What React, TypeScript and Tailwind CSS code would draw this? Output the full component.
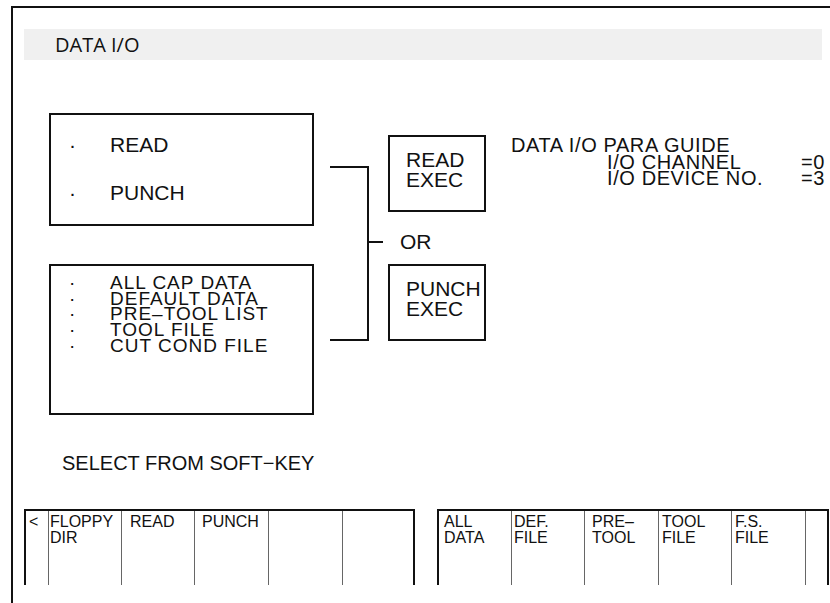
import React from 'react'

const sans = { fontFamily: '"Liberation Sans", Arial, sans-serif' }

type Key = { lines: string[]; w: string; pl: string; edge?: 'left' | 'right' }

const leftKeys: Key[] = [
  { lines: ['<'], w: 'w-[24px]', pl: 'pl-[3px]', edge: 'left' },
  { lines: ['FLOPPY', 'DIR'], w: 'w-[73px]', pl: 'pl-[1px]' },
  { lines: ['READ'], w: 'w-[73px]', pl: 'pl-[8px]' },
  { lines: ['PUNCH'], w: 'w-[74px]', pl: 'pl-[7px]' },
  { lines: [], w: 'w-[74px]', pl: 'pl-[2px]' },
  { lines: [], w: 'w-[73px]', pl: 'pl-[2px]', edge: 'right' },
]

const rightKeys: Key[] = [
  { lines: ['ALL', 'DATA'], w: 'w-[74px]', pl: 'pl-[5px]', edge: 'left' },
  { lines: ['DEF.', 'FILE'], w: 'w-[73px]', pl: 'pl-[2px]' },
  { lines: ['PRE\u2013', 'TOOL'], w: 'w-[74px]', pl: 'pl-[7px]' },
  { lines: ['TOOL', 'FILE'], w: 'w-[73px]', pl: 'pl-[3px]' },
  { lines: ['F.S.', 'FILE'], w: 'w-[74px]', pl: 'pl-[3px]' },
  { lines: [], w: 'w-[24px]', pl: 'pl-[2px]', edge: 'right' },
]

function SoftKey({ k }: { k: Key }) {
  const border =
    k.edge === 'left'
      ? 'border-l-2 border-[#111]'
      : k.edge === 'right'
        ? 'border-l border-l-[#666] border-r-2 border-r-[#111]'
        : 'border-l border-[#666]'
  return (
    <div className={`${k.w} ${k.pl} ${border} h-full pt-[3px] text-[16px] leading-[16px] text-[#111] box-border shrink-0`}>
      {k.lines.map((l) => (
        <div key={l}>{l}</div>
      ))}
    </div>
  )
}

function KeyGroup({ keys }: { keys: Key[] }) {
  return (
    <div className="flex h-[76px] border-t-2 border-[#111]">
      {keys.map((k, i) => (
        <SoftKey key={i} k={k} />
      ))}
    </div>
  )
}

function Bullet({ children }: { children: string }) {
  return (
    <div className="flex">
      <span className="w-[59px] pl-[18px]">·</span>
      <span>{children}</span>
    </div>
  )
}

function ExecBox({ lines }: { lines: string[] }) {
  return (
    <div className="ml-[19px] w-[98px] h-[77px] border-2 border-[#111] pl-[16px] pt-[13px] leading-[20px]">
      {lines.map((l) => (
        <div key={l}>{l}</div>
      ))}
    </div>
  )
}

export default function App() {
  return (
    <div className="w-[830px] h-[603px] overflow-hidden bg-white text-[#111]" style={sans}>
      <div className="ml-[11px] mt-[6px] h-[597px] border-l-2 border-t-2 border-[#111]">
        {/* header */}
        <div
          className="mt-[21px] ml-[11px] w-[798px] h-[31px] bg-[#f0f0f0] flex items-center pl-[31px] text-[20px]"
          style={{ fontFamily: '"Open Sans", sans-serif' }}
        >
          DATA I/O
        </div>

        {/* diagram */}
        <div className="mt-[53px] ml-[36px] flex items-start text-[21px]">
          <div className="w-[265px] flex flex-col">
            <div className="h-[113px] border-2 border-[#111] pt-[18px] flex flex-col gap-[24px] leading-[24px]">
              <Bullet>READ</Bullet>
              <Bullet>PUNCH</Bullet>
            </div>
            <div className="mt-[38px] h-[151px] border-2 border-[#111] pt-[9px] text-[19px] tracking-[1px] leading-[15.7px]">
              <Bullet>ALL CAP DATA</Bullet>
              <Bullet>DEFAULT DATA</Bullet>
              <Bullet>PRE–TOOL LIST</Bullet>
              <Bullet>TOOL FILE</Bullet>
              <Bullet>CUT COND FILE</Bullet>
            </div>
          </div>

          <div className="ml-[16px] mt-[53px] w-[39px] h-[175px] border-t-2 border-r-2 border-b-2 border-[#111]" />

          <div className="flex flex-col mt-[22px]">
            <ExecBox lines={['READ', 'EXEC']} />
            <div className="h-[52px] pt-[8px] flex items-center">
              <div className="w-[14px] h-[2px] bg-[#111]" />
              <span className="ml-[17px] leading-[20px]">OR</span>
            </div>
            <ExecBox lines={['PUNCH', 'EXEC']} />
          </div>

          <div className="ml-[25px] mt-[24px] text-[20px] tracking-[0.6px] leading-[16.5px] whitespace-nowrap">
            <div>DATA I/O PARA GUIDE</div>
            <div className="pl-[96px] grid grid-cols-[194px_auto]">
              <span>I/O CHANNEL</span>
              <span>=0</span>
              <span>I/O DEVICE NO.</span>
              <span>=3</span>
            </div>
          </div>
        </div>

        {/* prompt */}
        <div className="mt-[38px] ml-[49px] text-[20px] leading-[20px]">SELECT FROM SOFT−KEY</div>

        {/* soft keys */}
        <div className="mt-[36px] ml-[11px] flex gap-[22px]">
          <KeyGroup keys={leftKeys} />
          <KeyGroup keys={rightKeys} />
        </div>
      </div>
    </div>
  )
}
